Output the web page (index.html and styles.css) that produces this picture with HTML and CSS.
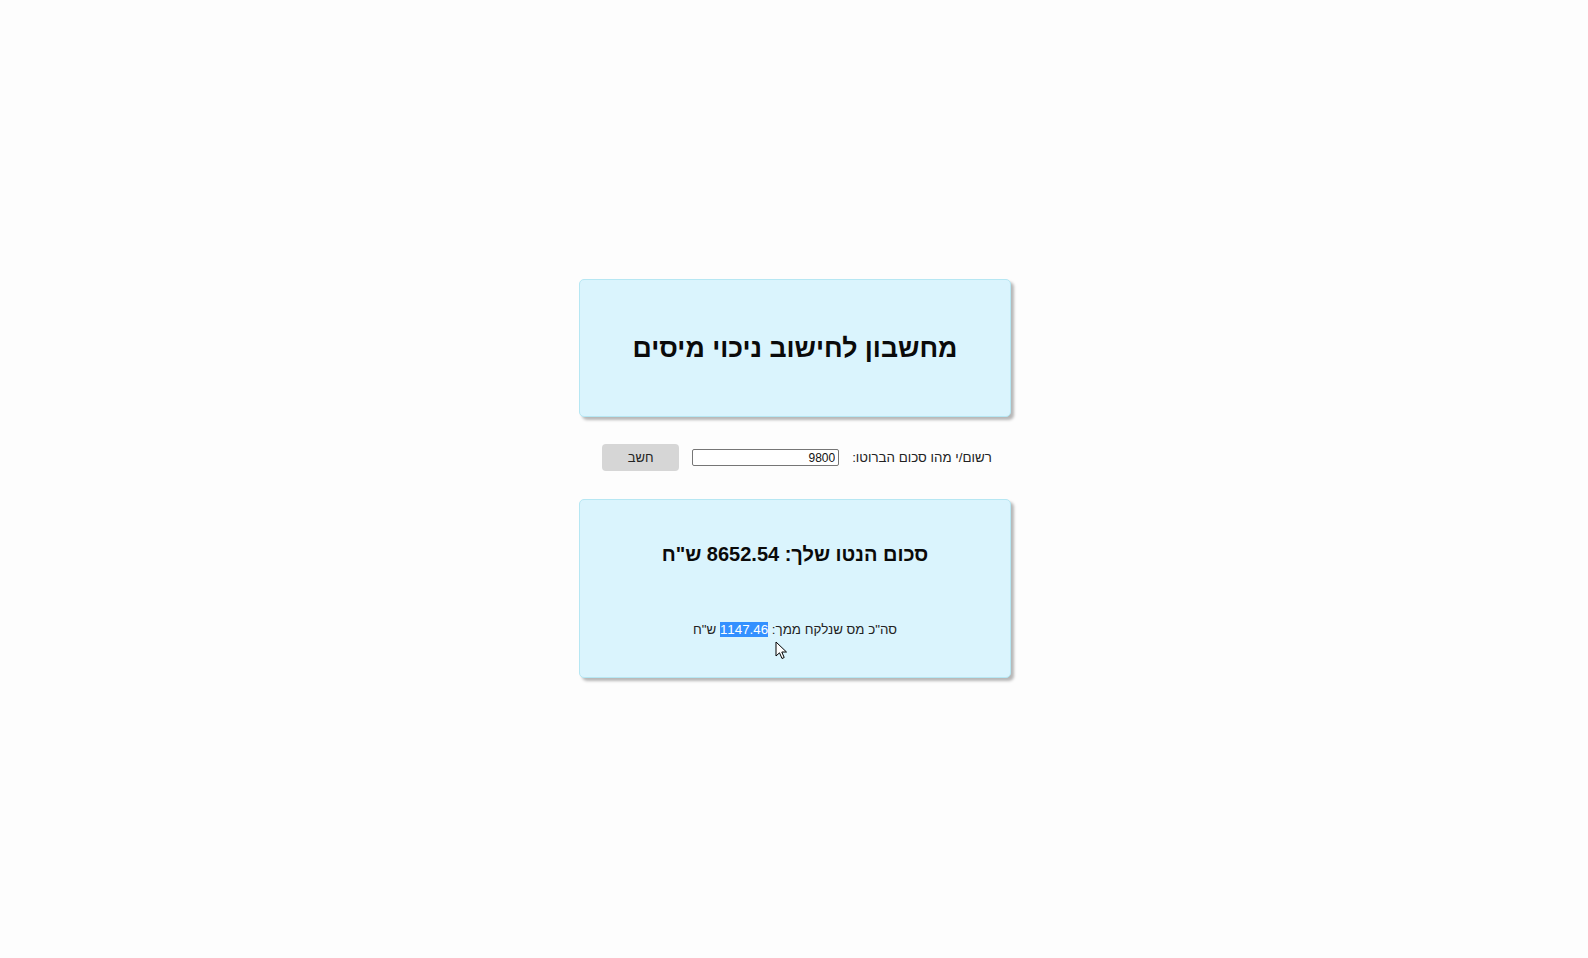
FILE: index.html
```html
<!DOCTYPE html>
<html lang="he" dir="rtl">
<head>
<meta charset="utf-8">
<title>מחשבון לחישוב ניכוי מיסים</title>
<link rel="stylesheet" href="styles.css">
</head>
<body>
<main class="page">
  <section class="card title-card">
    <h1 class="title">מחשבון לחישוב ניכוי מיסים</h1>
  </section>
  <form class="calc-row">
    <label class="calc-label" for="gross">רשום/י מהו סכום הברוטו:</label>
    <input class="calc-input" id="gross" type="text" value="9800" dir="rtl">
    <button class="calc-btn" type="button">חשב</button>
  </form>
  <section class="card result-card">
    <h2 class="net">סכום הנטו שלך: 8652.54 ש"ח</h2>
    <p class="tax">סה"כ מס שנלקח ממך: <span class="sel">1147.46</span> ש"ח</p>
  </section>
</main>
<svg class="cursor" width="14" height="20" viewBox="0 0 14 20">
  <path d="M1 1 L1 15 L4.5 11.8 L7 17.5 L9.2 16.5 L6.8 11 L11.5 11 Z" fill="#fff" stroke="#000" stroke-width="1" stroke-linejoin="round"/>
</svg>
</body>
</html>
```
FILE: styles.css
```css
html, body {
  margin: 0;
  padding: 0;
  background: #fdfdfd;
}
body {
  font-family: "Liberation Sans", Arial, "DejaVu Sans", sans-serif;
  color: #111;
  min-height: 958px;
  position: relative;
}
.page {
  display: flex;
  flex-direction: column;
  align-items: center;
  padding-top: 279px;
  padding-left: 2px;
}
.card {
  box-sizing: border-box;
  width: 432px;
  background: #daf4fd;
  border: 1px solid #b6e7f3;
  border-radius: 5px;
  box-shadow: 3px 3px 3px rgba(0, 0, 0, 0.28);
  display: flex;
  flex-direction: column;
  align-items: center;
}
.title-card {
  height: 138px;
  justify-content: center;
}
.title {
  margin: 0;
  font-size: 26.67px;
  font-weight: bold;
  color: #0a0a0a;
}
.calc-row {
  display: flex;
  align-items: center;
  gap: 13px;
  margin: 27px 0 28px;
  height: 27px;
  padding-left: 4px;
}
.calc-label {
  font-size: 13.33px;
  color: #222;
}
.calc-input {
  box-sizing: border-box;
  width: 147px;
  height: 17px;
  border: 1px solid #767676;
  border-radius: 2px;
  padding: 0 3px;
  font-family: "Liberation Sans", Arial, sans-serif;
  font-size: 12px;
  color: #111;
  background: #fff;
  text-align: right;
}
.calc-btn {
  box-sizing: border-box;
  width: 77px;
  height: 27px;
  border: none;
  border-radius: 4px;
  background: #d6d6d6;
  font-family: "Liberation Sans", Arial, sans-serif;
  font-size: 13px;
  color: #222;
}
.result-card {
  height: 179px;
  padding-top: 43px;
}
.net {
  margin: 0;
  font-size: 20px;
  font-weight: bold;
  color: #0a0a0a;
}
.tax {
  margin: 56px 0 0;
  font-size: 13.33px;
  color: #222;
}
.sel {
  background: #3390ff;
  color: #fff;
}
.cursor {
  position: absolute;
  left: 775px;
  top: 641px;
}
```
